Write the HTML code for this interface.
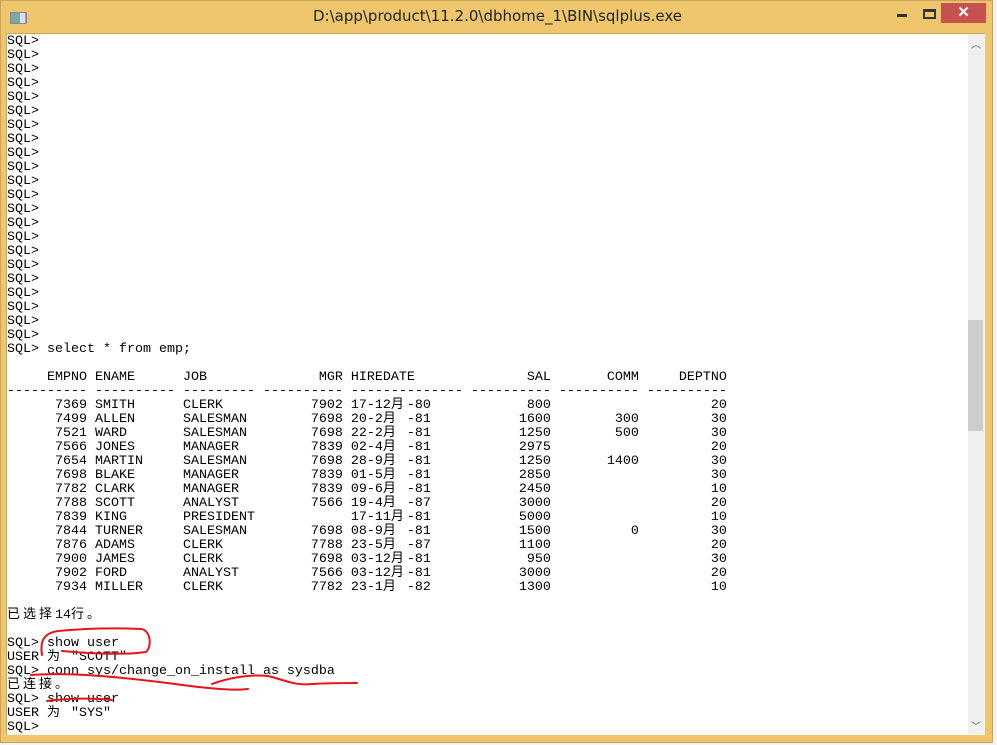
<!DOCTYPE html>
<html><head><meta charset="utf-8"><style>
html,body{margin:0;padding:0;}
body{width:997px;height:745px;overflow:hidden;background:#f3f3f3;position:relative;font-family:"Liberation Sans",sans-serif;}
#win{position:absolute;left:0;top:0;width:993px;height:743px;background:#f0c66c;border:1px solid #c9a45a;box-sizing:border-box;}
#title{position:absolute;left:0;top:0;width:993px;height:33px;text-align:center;line-height:30px;font-size:15px;color:#222;font-family:"DejaVu Sans","Liberation Sans",sans-serif;}
#icon{position:absolute;left:9px;top:11px;width:15px;height:10px;background:#7aa;border:1px solid #889;}
#icon:after{content:"";position:absolute;left:9px;top:0;width:5px;height:10px;background:#dde;}
#min{position:absolute;left:896px;top:13px;width:10px;height:3px;background:#333;}
#max{position:absolute;left:922px;top:8px;width:13px;height:10px;border:2px solid #333;border-top-width:3px;box-sizing:border-box;}
#close{position:absolute;left:940px;top:2px;width:45px;height:20px;background:#c75050;color:#fff;text-align:center;font-size:15px;line-height:20px;font-weight:bold;}
#con{position:absolute;left:6px;top:33px;width:978px;height:701px;background:#fff;border-left:1px solid #c9a45a;border-top:1px solid #c9a45a;overflow:hidden;}
pre{margin:0;position:absolute;left:0px;top:1px;font-family:"Liberation Mono","Noto Sans CJK SC",monospace;font-size:13.33px;line-height:14px;color:#000;}
.c{display:inline-block;width:16px;height:14px;font-family:"Noto Sans CJK SC","WenQuanYi Zen Hei",sans-serif;font-size:13px;line-height:14px;vertical-align:top;position:relative;top:-3px;}
#sb{position:absolute;left:968px;top:34px;width:16px;height:700px;background:#f0f0f0;}
#thumb{position:absolute;left:968px;top:320px;width:15px;height:111px;background:#cdcdcd;}
.arr{position:absolute;left:971px;font-size:10px;color:#606060;}
svg{position:absolute;left:0;top:0;}
</style></head><body>
<div id="win">
<div id="title">D:\app\product\11.2.0\dbhome_1\BIN\sqlplus.exe</div>
<div id="icon"></div><div id="min"></div><div id="max"></div><div id="close">✕</div>
</div>
<div id="con">
<pre>SQL&gt;
SQL&gt;
SQL&gt;
SQL&gt;
SQL&gt;
SQL&gt;
SQL&gt;
SQL&gt;
SQL&gt;
SQL&gt;
SQL&gt;
SQL&gt;
SQL&gt;
SQL&gt;
SQL&gt;
SQL&gt;
SQL&gt;
SQL&gt;
SQL&gt;
SQL&gt;
SQL&gt;
SQL&gt;
SQL&gt; select * from emp;

     EMPNO ENAME      JOB              MGR HIREDATE              SAL       COMM     DEPTNO
---------- ---------- --------- ---------- -------------- ---------- ---------- ----------
      7369 SMITH      CLERK           7902 17-12<span class="c">月</span>-80            800                    20
      7499 ALLEN      SALESMAN        7698 20-2<span class="c">月</span> -81           1600        300         30
      7521 WARD       SALESMAN        7698 22-2<span class="c">月</span> -81           1250        500         30
      7566 JONES      MANAGER         7839 02-4<span class="c">月</span> -81           2975                    20
      7654 MARTIN     SALESMAN        7698 28-9<span class="c">月</span> -81           1250       1400         30
      7698 BLAKE      MANAGER         7839 01-5<span class="c">月</span> -81           2850                    30
      7782 CLARK      MANAGER         7839 09-6<span class="c">月</span> -81           2450                    10
      7788 SCOTT      ANALYST         7566 19-4<span class="c">月</span> -87           3000                    20
      7839 KING       PRESIDENT            17-11<span class="c">月</span>-81           5000                    10
      7844 TURNER     SALESMAN        7698 08-9<span class="c">月</span> -81           1500          0         30
      7876 ADAMS      CLERK           7788 23-5<span class="c">月</span> -87           1100                    20
      7900 JAMES      CLERK           7698 03-12<span class="c">月</span>-81            950                    30
      7902 FORD       ANALYST         7566 03-12<span class="c">月</span>-81           3000                    20
      7934 MILLER     CLERK           7782 23-1<span class="c">月</span> -82           1300                    10

<span class="c">已</span><span class="c">选</span><span class="c">择</span>14<span class="c">行</span><span class="c">。</span>

SQL&gt; show user
USER <span class="c">为</span> "SCOTT"
SQL&gt; conn sys/change_on_install as sysdba
<span class="c">已</span><span class="c">连</span><span class="c">接</span><span class="c">。</span>
SQL&gt; show user
USER <span class="c">为</span> "SYS"
SQL&gt;</pre>
</div>
<div id="sb"></div><div id="thumb"></div>
<div class="arr" style="top:36px">︿</div>
<div class="arr" style="top:718px">﹀</div>
<svg width="997" height="745" fill="none" stroke="#e8141c" stroke-width="2" stroke-linecap="round">
<path d="M42,655 C40,642 43,633 58,631 C90,628 120,628 141,629 C151,630 152,647 146,652 C125,655 95,654 62,651"/>
<path d="M31,675 C70,672 120,677 175,684 C205,688 232,691 248,689"/>
<path d="M212,684 C228,678 250,674 268,676 C285,680 295,686 312,684 C330,683 345,683 357,683"/>
<path d="M47,701 C70,698 95,698 112,700"/>
</svg>
</body></html>
